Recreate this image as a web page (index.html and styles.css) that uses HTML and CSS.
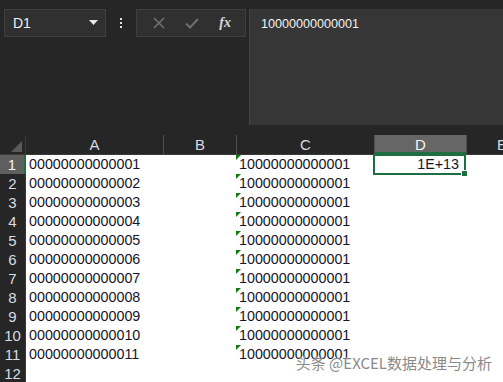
FILE: index.html
```html
<!DOCTYPE html>
<html lang="zh">
<head>
  <meta charset="UTF-8" />
  <title>Excel</title>
  <link rel="stylesheet" href="styles.css">
</head>
<body>
  <!-- Barra de fórmulas -->
  <div class="top">
    <div class="namebox">
      <span>D1</span>
      <svg class="caret" width="9" height="5" viewBox="0 0 9 5"><path d="M0 0h9L4.5 5z" fill="#e8e8e8"/></svg>
    </div>
    <div class="dots"><i></i><i></i><i></i></div>
    <div class="btns">
      <svg width="12" height="12" viewBox="0 0 12 12"><path d="M1 1l10 10M11 1L1 11" stroke="#707070" stroke-width="1.6"/></svg>
      <svg width="14" height="11" viewBox="0 0 14 11"><path d="M1 5.5l4 4L13 1" stroke="#707070" stroke-width="2" fill="none"/></svg>
      <span class="fx">fx</span>
    </div>
    <div class="formula">10000000000001</div>
  </div>

  <!-- Planilha -->
  <div class="sheet">
    <div class="corner"><span class="tri"></span></div>
    <div class="colhead">A</div>
    <div class="colhead">B</div>
    <div class="colhead">C</div>
    <div class="colhead sel">D</div>
    <div class="colhead last">E</div>
  </div>
  <div class="rows" id="rows"></div>

  <div class="mark">头条 @EXCEL数据处理与分析</div>

  <script>
    const rows = document.getElementById("rows");
    for (let i = 1; i <= 12; i++) {
      const a = i <= 11 ? String(i).padStart(14, "0") : "";
      const c = i <= 11 ? "10000000000001" : "";
      const d = i === 1 ? "1E+13" : "";
      const row = document.createElement("div");
      row.className = "row" + (i === 1 ? " active" : "");
      row.innerHTML =
        '<div class="rowhead">' + i + '</div>' +
        '<div class="cell">' + a + '</div>' +
        '<div class="cell"></div>' +
        '<div class="cell txt">' + (c ? '<span class="flag"></span>' + c : '') + '</div>' +
        '<div class="cell num">' + d + (i === 1 ? '<span class="handle"></span>' : '') + '</div>' +
        '<div class="cell"></div>';
      rows.appendChild(row);
    }
  </script>
</body>
</html>
```

FILE: styles.css
```css
/* Geral */
body {
  margin: 0;
  background: #fff;
  font-family: "Liberation Sans", Arial, sans-serif;
  overflow: hidden;
}

/* Barra superior */
.top {
  display: flex;
  align-items: flex-start;
  background: #262626;
  height: 135px;
  padding: 9px 0 0 4px;
  box-sizing: border-box;
}

.namebox {
  width: 102px;
  height: 28px;
  box-sizing: border-box;
  border: 1px solid #3f3f3f;
  background: #303030;
  display: flex;
  align-items: center;
  justify-content: space-between;
  padding: 0 7px 0 8px;
  color: #f0f0f0;
  font-size: 14px;
}

.caret {
  margin-top: -2px;
}

.dots {
  width: 30px;
  height: 28px;
  display: flex;
  flex-direction: column;
  align-items: center;
  justify-content: center;
  gap: 2px;
}

.dots i {
  width: 2px;
  height: 2px;
  background: #e0e0e0;
}

.btns {
  width: 110px;
  height: 28px;
  box-sizing: border-box;
  border: 1px solid #3f3f3f;
  background: #303030;
  display: flex;
  align-items: center;
  justify-content: space-around;
  padding: 0 4px 0 6px;
}

.fx {
  font-family: "Liberation Serif", serif;
  font-style: italic;
  font-weight: bold;
  color: #d8d8d8;
  font-size: 14px;
}

.formula {
  flex: 1;
  margin-left: 3px;
  height: 116px;
  background: #363636;
  border-left: 1px solid #444;
  color: #f2f2f2;
  font-size: 12.6px;
  padding: 8px 0 0 11px;
  box-sizing: border-box;
}

/* Cabeçalhos */
.sheet,
.row {
  display: grid;
  grid-template-columns: 26px 137px 73px 138px 92px 1fr;
}

.sheet {
  background: #262626;
  height: 19px;
  border-bottom: 1px solid #3a3a3a;
}

.corner {
  position: relative;
  border-right: 1px solid #3a3a3a;
}

.tri {
  position: absolute;
  right: 3px;
  bottom: 2px;
  width: 0;
  height: 0;
  border-left: 11px solid transparent;
  border-bottom: 11px solid #5a5a5a;
}

.colhead {
  color: #d6dbe4;
  font-size: 15px;
  text-align: center;
  line-height: 19px;
  border-left: 1px solid #505050;
}

.colhead:nth-child(2) {
  border-left: none;
}

.colhead.sel {
  background: #666;
  color: #f4f4f4;
  border-bottom: 2px solid #1e6e42;
  height: 17px;
  line-height: 19px;
}

.colhead.last {
  text-align: left;
  padding-left: 30px;
  white-space: nowrap;
  overflow: hidden;
}

/* Linhas */
.row {
  height: 19px;
}

.rowhead {
  background: #262626;
  color: #d6dbe4;
  font-size: 15px;
  text-align: center;
  line-height: 19px;
  border-bottom: 1px solid #3a3a3a;
  border-right: 1px solid #3a3a3a;
  box-sizing: border-box;
}

.row.active .rowhead {
  background: #5f5f5f;
  border-right: 2px solid #1e6e42;
  color: #f4f4f4;
}

.cell {
  position: relative;
  font-size: 14.3px;
  line-height: 19px;
  color: #15152a;
  padding-left: 3px;
  white-space: nowrap;
}

.flag {
  position: absolute;
  left: 0;
  top: 0;
  width: 0;
  height: 0;
  border-top: 5px solid #107c10;
  border-right: 5px solid transparent;
}

.cell.num {
  text-align: right;
  padding-right: 5px;
}

.row.active .cell.num {
  border: 2px solid #1e6e42;
  margin: -1px 0 0 -1px;
  line-height: 17px;
}

.handle {
  position: absolute;
  right: -4px;
  bottom: -4px;
  width: 5px;
  height: 5px;
  background: #1e6e42;
  border: 1px solid #fff;
}

/* Marca d'água */
.mark {
  position: absolute;
  right: 11px;
  top: 353px;
  white-space: nowrap;
  font-family: "Noto Sans CJK SC", sans-serif;
  font-size: 15px;
  line-height: 20px;
  color: #8a8a8a;
  text-shadow: 0 0 2px #fff;
}
```
